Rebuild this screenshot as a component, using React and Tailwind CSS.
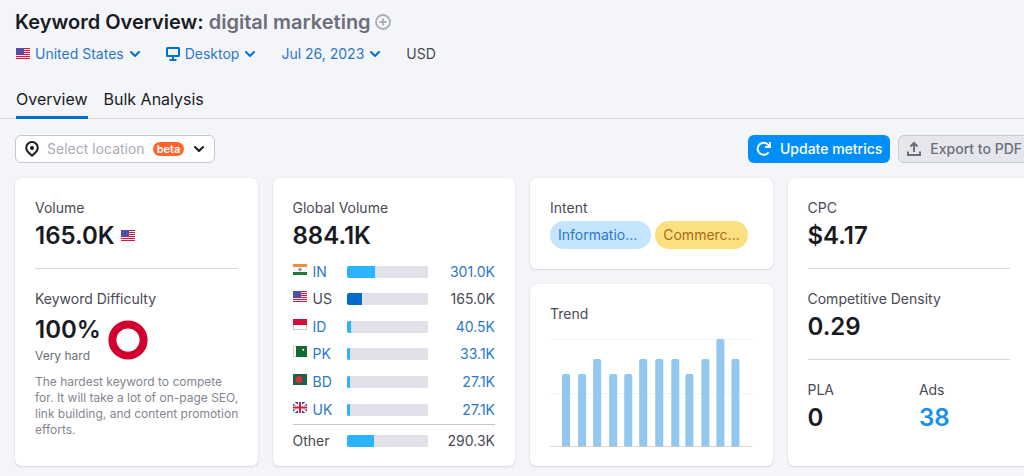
import { clsx } from 'clsx';

const countries = [
  { code: 'IN', flag: 'IN', volume: '301.0K', share: 34 },
  { code: 'US', flag: 'US', volume: '165.0K', share: 18, current: true },
  { code: 'ID', flag: 'ID', volume: '40.5K', share: 5 },
  { code: 'PK', flag: 'PK', volume: '33.1K', share: 4 },
  { code: 'BD', flag: 'BD', volume: '27.1K', share: 4 },
  { code: 'UK', flag: 'UK', volume: '27.1K', share: 4 },
];

const trend = [
  { x: 12, h: 73 },
  { x: 28, h: 73 },
  { x: 43, h: 88 },
  { x: 59, h: 73 },
  { x: 74, h: 73 },
  { x: 89, h: 88 },
  { x: 105, h: 88 },
  { x: 121, h: 88 },
  { x: 135, h: 73 },
  { x: 151, h: 88 },
  { x: 166, h: 108 },
  { x: 181, h: 88 },
];

const flags = {
  US: (
    <>
      <rect width="14" height="11" fill="#fbe9ee" />
      <path d="M0 .5h14M0 2.5h14M0 4.5h14M0 6.5h14M0 8.5h14M0 10.5h14" stroke="#d3163c" strokeWidth="1.2" />
      <rect width="8" height="6.500" fill="#5050a8" />
    </>
  ),
  IN: (
    <>
      <rect width="14" height="11" fill="#fafafa" />
      <rect width="14" height="3" fill="#e8913a" />
      <rect y="8" width="14" height="3" fill="#1f7a35" />
      <circle cx="7" cy="5.5" r="1.8" fill="#8f9cc9" />
    </>
  ),
  ID: (
    <>
      <rect x=".5" y=".5" width="13" height="10" fill="#fff" stroke="#c9c9cf" />
      <rect width="14" height="6" fill="#d0103a" />
    </>
  ),
  PK: (
    <>
      <rect x=".5" y=".5" width="13" height="10" fill="#fff" stroke="#c9d4cc" />
      <rect x="3" width="11" height="11" fill="#14692f" />
      <path d="M6.500 3a3 3 0 1 0 4.800 4.400A2.700 2.700 0 0 1 6.500 3z" fill="#fff" />
      <circle cx="10.2" cy="3.8" r="1" fill="#fff" />
    </>
  ),
  BD: (
    <>
      <rect width="14" height="11" fill="#1c6343" />
      <circle cx="6" cy="5.5" r="3.5" fill="#d5303e" />
    </>
  ),
  UK: (
    <>
      <rect width="14" height="11" fill="#35397d" />
      <path d="M0 0l14 11M14 0L0 11" stroke="#f3eef2" strokeWidth="2.2" />
      <path d="M7 0v11M0 5.5h14" stroke="#f8f4f6" strokeWidth="4" />
      <path d="M7 0v11M0 5.5h14" stroke="#d0203c" strokeWidth="2" />
    </>
  ),
};

function Flag({ name, className }) {
  return (
    <svg viewBox="0 0 14 12" className={clsx('h-3 w-[14px] shrink-0', className)} aria-hidden="true">
      {flags[name]}
    </svg>
  );
}

function Chevron({ className }) {
  return (
    <svg viewBox="0 0 12 8" className={clsx('h-2 w-3 shrink-0', className)} fill="none" stroke="currentColor" strokeWidth="2" strokeLinecap="round" strokeLinejoin="round" aria-hidden="true">
      <path d="M2 2l4 4 4-4" />
    </svg>
  );
}

function Filter({ icon, label, value }) {
  return (
    <label className="flex items-center text-[#0070cc]">
      {icon}
      <select aria-label={label} className="field-sizing-content cursor-pointer appearance-none bg-transparent text-sm leading-5 text-[#2b78c9] outline-none">
        <option>{value}</option>
      </select>
      <Chevron className="ml-[5px]" />
    </label>
  );
}

function Card({ className, children }) {
  return (
    <section className={clsx('rounded-md bg-white px-5 shadow-[0_0_1px_rgba(25,27,35,0.16),0_1px_2px_rgba(25,27,35,0.12)]', className)}>
      {children}
    </section>
  );
}

function Metric({ label, value, valueClass = 'text-[#191b23]', children }) {
  return (
    <div>
      <h2 className="text-sm leading-5 text-[#484a54]">{label}</h2>
      <p className={clsx('flex items-center text-2xl leading-9 font-semibold', valueClass)}>
        {value}
        {children}
      </p>
    </div>
  );
}

function VolumeBar({ share, current }) {
  return (
    <div className="h-3 overflow-hidden rounded-xs bg-[#e0e1e9]">
      <div className={clsx('h-full', current ? 'bg-[#006dca]' : 'bg-[#2bb3ff]')} style={{ width: `${share}%` }} />
    </div>
  );
}

function GlobalVolume() {
  return (
    <Card className="pt-5 pb-2">
      <Metric label="Global Volume" value="884.1K" />
      <table className="mt-1 h-[200px] w-full table-fixed border-collapse text-sm leading-5">
        <tbody>
          {countries.map((c) => (
            <tr key={c.code} className={c.current ? 'text-[#484a54]' : 'text-[#2b78c9]'}>
              <th scope="row" className="w-[27%] p-0 text-left font-normal">
                <span className="flex items-center gap-[6px]">
                  <Flag name={c.flag} className="mb-1" />
                  {c.current ? c.code : <a href="#">{c.code}</a>}
                </span>
              </th>
              <td className="w-[40%] p-0">
                <VolumeBar share={c.share} current={c.current} />
              </td>
              <td className="p-0 text-right">{c.current ? c.volume : <a href="#">{c.volume}</a>}</td>
            </tr>
          ))}
          <tr className="h-[34px] border-t border-[#c4c7cf] text-[#484a54]">
            <th scope="row" className="p-0 text-left font-normal">Other</th>
            <td className="p-0">
              <VolumeBar share={33} />
            </td>
            <td className="p-0 text-right">290.3K</td>
          </tr>
        </tbody>
      </table>
    </Card>
  );
}

function TrendChart() {
  return (
    <svg viewBox="0 0 202 108" className="mt-[15px] w-full" role="img" aria-label="Search volume trend over twelve months">
      <path d="M0 .5h202M0 54.5h202" stroke="#f0f1f4" />
      {trend.map((bar) => (
        <path
          key={bar.x}
          d={`M${bar.x} 108v-${bar.h - 2}q0-2 2-2h4q2 0 2 2v${bar.h - 2}z`}
          fill="#93c7ee"
        />
      ))}
      <path d="M0 107.5h202" stroke="#c9ccd4" />
    </svg>
  );
}

export default function App() {
  return (
    <div className="min-h-screen overflow-x-hidden bg-[#f4f5f9] pb-[10px] font-['Inter','Liberation_Sans',sans-serif] text-[#191b23]">
      <header>
        <div className="flex items-center px-[15px] pt-2">
          <h1 className="text-xl leading-7 font-semibold">
            Keyword Overview: <span className="text-[#6c6e79]">digital marketing</span>
          </h1>
          <button type="button" aria-label="Add keyword" className="ml-1 text-[#a9abb6]">
            <svg viewBox="0 0 16 16" className="size-4" fill="none" stroke="currentColor" strokeWidth="1.8" aria-hidden="true">
              <circle cx="8" cy="8" r="7" />
              <path d="M8 4.5v7M4.5 8h7" />
            </svg>
          </button>
        </div>

        <div className="mt-2 flex items-center gap-[25px] px-4 text-sm leading-5">
          <Filter label="Country" value="United States" icon={<Flag name="US" className="mr-[5px]" />} />
          <Filter
            label="Device"
            value="Desktop"
            icon={
              <svg viewBox="0 0 14 14" className="mr-[5px] size-[14px]" fill="none" stroke="currentColor" strokeWidth="2" aria-hidden="true">
                <rect x="1" y="1" width="12" height="8" rx=".5" />
                <path d="M7 9v3M3.5 13h7" />
              </svg>
            }
          />
          <Filter label="Date" value="Jul 26, 2023" />
          <span className="text-[#484a54]">USD</span>
        </div>

        <nav className="mt-5 flex gap-4 border-b border-[#d9dbe1] px-4 text-base leading-[30px]">
          <a href="#" aria-current="page" className="-mb-px border-b-[3px] border-[#0070cc] pb-[2px]">Overview</a>
          <a href="#" className="-mb-px border-b-[3px] border-transparent pb-[2px]">Bulk Analysis</a>
        </nav>
      </header>

      {/* cards and toolbar run slightly past the right edge */}
      <main className="-mr-[6px] pl-[15px]">
        <div className="mt-4 flex items-center justify-between">
          <label className="flex h-7 items-center rounded-md border border-[#c4c7cf] bg-white px-[9px]">
            <svg viewBox="0 0 14 16" className="mr-2 h-4 w-[14px]" fill="none" stroke="currentColor" strokeWidth="2" aria-hidden="true">
              <path d="M7 14.7C4.5 12.8 1.2 10.2 1.2 6.8a5.8 5.8 0 0 1 11.6 0c0 3.4-3.3 6-5.8 7.900z" strokeLinejoin="round" />
              <circle cx="7" cy="7" r="2" fill="currentColor" stroke="none" />
            </svg>
            <select aria-label="Select location" className="field-sizing-content cursor-pointer appearance-none bg-transparent text-sm leading-5 text-[#a9abb6] outline-none">
              <option>Select location</option>
            </select>
            <span className="ml-2 rounded-full bg-[#ff642d] px-1 text-[11px] leading-[14px] font-semibold text-white">beta</span>
            <Chevron className="ml-[9px]" />
          </label>

          <div className="flex gap-2">
            <button type="button" className="flex h-7 items-center gap-2 rounded-md bg-[#008ff8] px-2 text-sm font-medium text-white">
              <svg viewBox="0 0 16 16" className="size-4" fill="none" stroke="currentColor" strokeWidth="2" aria-hidden="true">
                <path d="M12.600 11.200A6 6 0 1 1 11.800 3.400L13.600 5.500" />
                <path d="M14 1v5H9" />
              </svg>
              Update metrics
            </button>
            <button type="button" className="flex h-7 items-center gap-2 rounded-md border border-[#c9cbd3] bg-[#e6e7ec] px-[7px] text-sm font-medium text-[#6c6e79]">
              <svg viewBox="0 0 16 16" className="size-4" fill="none" stroke="currentColor" strokeWidth="2" aria-hidden="true">
                <path d="M8 11V2.500M4.500 5.500L8 2l3.500 3.500M2 10.500V14h12v-3.500" />
              </svg>
              Export to PDF
            </button>
          </div>
        </div>

        <div className="mt-[15px] grid grid-cols-4 gap-[15px]">
          <Card className="pt-5">
            <Metric label="Volume" value="165.0K">
              <Flag name="US" className="ml-[6px]" />
            </Metric>
            <div className="mt-[14px] border-t border-[#d5d7de] pt-5">
              <h2 className="text-sm leading-5 text-[#484a54]">Keyword Difficulty</h2>
              <div className="mt-[5px] flex items-center gap-[7px]">
                <div>
                  <p className="text-2xl leading-8 font-semibold">100%</p>
                  <p className="text-xs leading-5 text-[#6c6e79]">Very hard</p>
                </div>
                <svg viewBox="0 0 40 40" className="size-10" fill="none" stroke="#d1002f" strokeWidth="8" aria-hidden="true">
                  <circle cx="20" cy="20" r="15.600" />
                </svg>
              </div>
              <p className="-mr-1 mt-2 text-xs leading-4 text-[#84868f]">
                The hardest keyword to compete for. It will take a lot of on-page SEO, link building, and content promotion efforts.
              </p>
            </div>
          </Card>

          <GlobalVolume />

          <div className="flex flex-col gap-[15px]">
            <Card className="py-5">
              <h2 className="text-sm leading-5 text-[#484a54]">Intent</h2>
              <div className="mt-[3px] flex gap-1 text-sm leading-7">
                <span className="w-1/2 rounded-full bg-[#c4e5fe] px-2 text-[#2b78c9]">Informatio...</span>
                <span className="rounded-full bg-[#fcdf7e] px-2 text-[#a86c1f]">Commerc...</span>
              </div>
            </Card>
            <Card className="flex-1 pt-5">
              <h2 className="text-sm leading-5 text-[#484a54]">Trend</h2>
              <TrendChart />
            </Card>
          </div>

          <Card className="pt-5">
            <Metric label="CPC" value="$4.17" />
            <div className="mt-[14px] border-t border-[#d5d7de] pt-5">
              <Metric label="Competitive Density" value="0.29" />
            </div>
            <div className="mt-[14px] grid grid-cols-[55%_45%] border-t border-[#d5d7de] pt-5">
              <Metric label="PLA" value="0" />
              <Metric label="Ads" value={<a href="#">38</a>} valueClass="text-[#1590ec]" />
            </div>
          </Card>
        </div>
      </main>
    </div>
  );
}
